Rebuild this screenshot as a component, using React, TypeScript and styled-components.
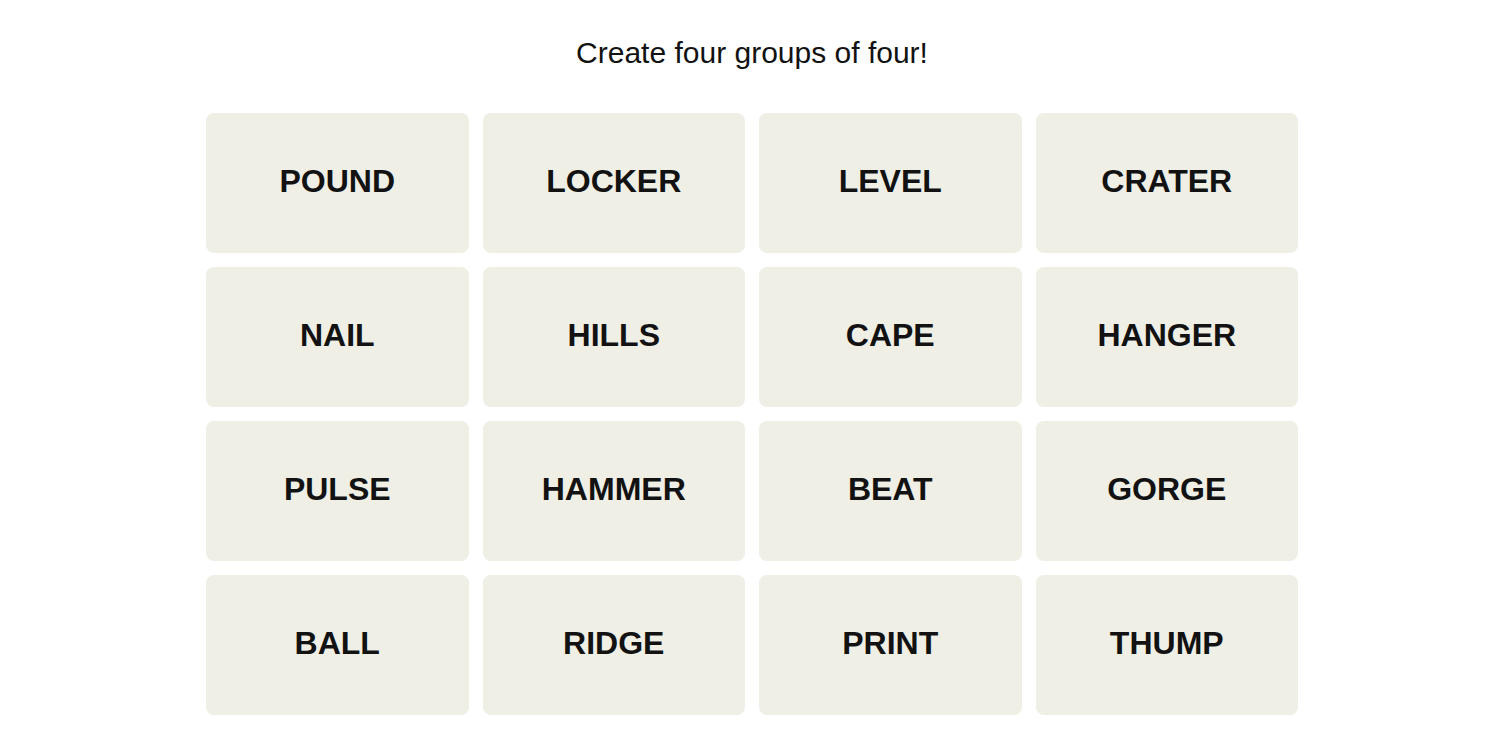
import React from 'react';
import styled, { createGlobalStyle } from 'styled-components';

const GlobalStyle = createGlobalStyle`
  html, body {
    margin: 0;
    padding: 0;
    background: #fff;
  }
  body {
    font-family: 'Liberation Sans', Arial, sans-serif;
    color: #121212;
  }
`;

const Page = styled.main`
  display: flex;
  flex-direction: column;
  align-items: center;
  padding: 33px 0 0 4px;
`;

const Title = styled.p`
  margin: 0;
  font-size: 30px;
  line-height: 40px;
  font-weight: 400;
  color: #121212;
`;

const Board = styled.div`
  display: grid;
  grid-template-columns: repeat(4, 262.5px);
  grid-auto-rows: 140px;
  gap: 14px;
  margin-top: 40px;
`;

const Tile = styled.button`
  display: flex;
  align-items: center;
  justify-content: center;
  border: none;
  border-radius: 8px;
  background: #efefe6;
  color: #121212;
  font-family: 'Liberation Sans', Arial, sans-serif;
  font-weight: 700;
  font-size: 32px;
  text-transform: uppercase;
  cursor: pointer;
  padding: 0 0 3px;
`;

const words = [
  'POUND', 'LOCKER', 'LEVEL', 'CRATER',
  'NAIL', 'HILLS', 'CAPE', 'HANGER',
  'PULSE', 'HAMMER', 'BEAT', 'GORGE',
  'BALL', 'RIDGE', 'PRINT', 'THUMP',
];

export default function App() {
  return (
    <>
      <GlobalStyle />
      <Page>
        <Title>Create four groups of four!</Title>
        <Board>
          {words.map((w) => (
            <Tile key={w}>{w}</Tile>
          ))}
        </Board>
      </Page>
    </>
  );
}
